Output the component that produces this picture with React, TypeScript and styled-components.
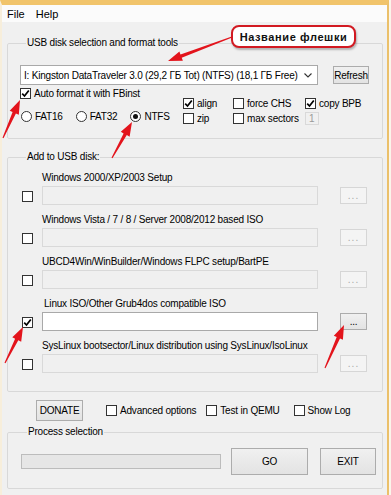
import React from "react";
import styled, { createGlobalStyle } from "styled-components";

// Red marker strokes drawn over the window: [tailX, tailY, tipX, tipY]
const ARROWS: [number, number, number, number][] = [
  [232, 37, 168, 61],
  [3, 138, 20, 100],
  [112, 158, 132, 122],
  [5, 363, 23, 327],
  [325, 368, 344, 325],
];

const arrowPoints = (x1: number, y1: number, x2: number, y2: number) => {
  const len = Math.hypot(x2 - x1, y2 - y1);
  const ux = (x2 - x1) / len;
  const uy = (y2 - y1) / len;
  const nx = -uy;
  const ny = ux;
  const head = 14;
  const bx = x2 - ux * head;
  const by = y2 - uy * head;
  const pts = [
    [x1 + nx * 0.6, y1 + ny * 0.6],
    [bx + nx * 1.8, by + ny * 1.8],
    [bx + nx * 5, by + ny * 5],
    [x2, y2],
    [bx - nx * 5, by - ny * 5],
    [bx - nx * 1.8, by - ny * 1.8],
    [x1 - nx * 0.6, y1 - ny * 0.6],
  ];
  return pts.map(p => p[0].toFixed(1) + "," + p[1].toFixed(1)).join(" ");
};

const GlobalStyle = createGlobalStyle`
  html, body {
    margin: 0;
    padding: 0;
    background: #fbf6ea;
  }
  body {
    font-family: "Liberation Sans", Arial, sans-serif;
    font-size: 10px;
    letter-spacing: -0.2px;
    color: #000;
  }
`;

const Root = styled.div`
  position: relative;
  width: 391px;
  height: 495px;
  overflow: hidden;
`;

const Window = styled.div`
  width: 389px;
  height: 495px;
  box-sizing: border-box;
  border-top: 5px solid #f1c46b;
  border-left: 2px solid #f7eedb;
  border-right: 2px solid #ebc06a;
  background: #f0f0f0;
  display: flex;
  flex-direction: column;
`;

const MenuBar = styled.div`
  height: 17px;
  background: #fbfbfb;
  display: flex;
  align-items: center;
  gap: 11px;
  padding-left: 5px;
  font-size: 11px;
  letter-spacing: 0;
`;

const Body = styled.div`
  padding: 14px 4px 0 5px;
`;

const Group = styled.fieldset<{ $mt: number; $pt: number; $pb: number; $pl: number }>`
  width: 376px;
  box-sizing: border-box;
  margin: ${p => p.$mt}px 0 0 0;
  padding: ${p => p.$pt}px 0 ${p => p.$pb}px ${p => p.$pl}px;
  border: 1px solid #d8d8d8;
  border-radius: 2px;
  min-width: 0;
`;

const Legend = styled.legend`
  margin-left: 6px;
  padding: 0 1px;
  line-height: 14px;
  font-size: 10px;
`;

const SelectRow = styled.div`
  display: flex;
  align-items: center;
  gap: 15px;
`;

const Select = styled.div`
  width: 298px;
  height: 20px;
  box-sizing: border-box;
  background: #fff;
  border: 1px solid #a9a9a9;
  display: flex;
  align-items: center;
  justify-content: space-between;
  padding: 0 5px 0 3px;
  white-space: nowrap;
  overflow: hidden;
`;

const Button = styled.div<{ $w: number; $h: number; $off?: boolean }>`
  width: ${p => p.$w}px;
  height: ${p => p.$h}px;
  box-sizing: border-box;
  flex: none;
  display: flex;
  align-items: center;
  justify-content: center;
  border: 1px solid ${p => (p.$off ? "#d6d6d6" : "#acacac")};
  background: ${p =>
    p.$off ? "#f4f4f4" : "linear-gradient(#f0f0f0, #e3e3e3)"};
  color: ${p => (p.$off ? "#a8a8a8" : "#000")};
  letter-spacing: ${p => (p.$off ? "1px" : "-0.2px")};
`;

const OptionsRow = styled.div`
  display: flex;
`;

const LeftCol = styled.div`
  width: 163px;
  display: flex;
  flex-direction: column;
  gap: 10px;
  padding-top: 2px;
`;

const RadioRow = styled.div`
  display: flex;
  gap: 13px;
  padding-left: 1px;
`;

const OptionGrid = styled.div`
  display: grid;
  grid-template-columns: 50px 72px auto;
  row-gap: 2px;
  padding-top: 12px;
  align-items: center;
`;

const Item = styled.div<{ $ml?: number }>`
  display: flex;
  align-items: center;
  gap: 3px;
  height: 13px;
  white-space: nowrap;
  margin-left: ${p => p.$ml || 0}px;
`;

const Box = styled.div`
  width: 11px;
  height: 11px;
  box-sizing: border-box;
  border: 1px solid #333;
  background: #fff;
  flex: none;
  display: flex;
  align-items: center;
  justify-content: center;
`;

const Circle = styled(Box)`
  border-radius: 50%;
`;

const Dot = styled.div`
  width: 5px;
  height: 5px;
  border-radius: 50%;
  background: #111;
`;

const SmallField = styled.div`
  width: 14px;
  height: 13px;
  box-sizing: border-box;
  border: 1px solid #d9d9d9;
  background: #f0f0f0;
  color: #9a9a9a;
  display: flex;
  align-items: center;
  padding-left: 3px;
`;

const IsoRow = styled.div`
  display: grid;
  grid-template-columns: 22px 276px 22px 27px;
  grid-template-rows: 14px 19px;
  row-gap: 1px;
  align-items: center;
  margin-bottom: 8px;
  &:last-child {
    margin-bottom: 0;
  }
`;

const IsoLabel = styled.div<{ $indent?: number }>`
  grid-column: 2 / 5;
  grid-row: 1;
  line-height: 14px;
  white-space: nowrap;
  padding-left: ${p => p.$indent || 0}px;
`;

const IsoCheck = styled.div`
  grid-column: 1;
  grid-row: 2;
  padding-left: 2px;
  padding-top: 2px;
`;

const PathField = styled.div<{ $on?: boolean }>`
  grid-column: 2;
  grid-row: 2;
  height: 19px;
  box-sizing: border-box;
  border: 1px solid ${p => (p.$on ? "#a9a9a9" : "#d9d9d9")};
  background: ${p => (p.$on ? "#fff" : "#f0f0f0")};
`;

const BrowseCell = styled.div`
  grid-column: 4;
  grid-row: 2;
`;

const FooterRow = styled.div`
  display: flex;
  align-items: center;
  margin-top: 8px;
  padding-left: 29px;
  height: 21px;
`;

const ProcessRow = styled.div`
  display: flex;
  align-items: center;
`;

const Progress = styled.div`
  width: 200px;
  height: 15px;
  box-sizing: border-box;
  border: 1px solid #bcbcbc;
  background: #e6e6e6;
  margin-right: 10px;
`;

const Overlay = styled.svg`
  position: absolute;
  left: 0;
  top: 0;
  pointer-events: none;
`;

const Callout = styled.div`
  position: absolute;
  left: 231px;
  top: 25px;
  width: 125px;
  height: 23px;
  box-sizing: border-box;
  border: 2px solid #d21a22;
  border-radius: 8px;
  background: #fff;
  box-shadow: 1px 2px 2px rgba(0, 0, 0, 0.25);
  display: flex;
  align-items: center;
  justify-content: center;
  font-weight: bold;
  font-size: 11px;
  letter-spacing: 0.6px;
  color: #111;
`;

const Tick = () => (
  <svg width="9" height="9" viewBox="0 0 9 9">
    <path d="M1.2 4.6 L3.5 7 L7.8 1.4" fill="none" stroke="#000" strokeWidth="1.7" />
  </svg>
);

const Check = ({ label, checked, ml }: { label?: string; checked?: boolean; ml?: number }) => (
  <Item $ml={ml}>
    <Box>{checked && <Tick />}</Box>
    {label && <span>{label}</span>}
  </Item>
);

const Radio = ({ label, checked }: { label: string; checked?: boolean }) => (
  <Item>
    <Circle>{checked && <Dot />}</Circle>
    <span>{label}</span>
  </Item>
);

const isoRows = [
  { label: "Windows 2000/XP/2003 Setup" },
  { label: "Windows Vista / 7 / 8 / Server 2008/2012 based ISO" },
  { label: "UBCD4Win/WinBuilder/Windows FLPC setup/BartPE" },
  { label: "Linux ISO/Other Grub4dos compatible ISO", on: true, indent: 2 },
  { label: "SysLinux bootsector/Linux distribution using SysLinux/IsoLinux" },
];

const App = () => {
  return (
    <Root>
      <GlobalStyle />
      <Window>
        <MenuBar>
          <span>File</span>
          <span>Help</span>
        </MenuBar>
        <Body>
          <Group $mt={0} $pt={15} $pb={13} $pl={12}>
            <Legend>USB disk selection and format tools</Legend>
            <SelectRow>
              <Select>
                <span>I: Kingston DataTraveler 3.0 (29,2 ГБ Tot) (NTFS) (18,1 ГБ Free)</span>
                <svg width="8" height="5" viewBox="0 0 8 5">
                  <path d="M0.5 0.5 L4 4 L7.5 0.5" fill="none" stroke="#333" strokeWidth="1.1" />
                </svg>
              </Select>
              <Button $w={36} $h={18}>Refresh</Button>
            </SelectRow>
            <OptionsRow>
              <LeftCol>
                <Check label="Auto format it with FBinst" checked />
                <RadioRow>
                  <Radio label="FAT16" />
                  <Radio label="FAT32" />
                  <Radio label="NTFS" checked />
                </RadioRow>
              </LeftCol>
              <OptionGrid>
                <Check label="align" checked />
                <Check label="force CHS" />
                <Check label="copy BPB" checked />
                <Check label="zip" />
                <Check label="max sectors" />
                <SmallField>1</SmallField>
              </OptionGrid>
            </OptionsRow>
          </Group>

          <Group $mt={11} $pt={7} $pb={18} $pl={12}>
            <Legend>Add to USB disk:</Legend>
            {isoRows.map(row => (
              <IsoRow key={row.label}>
                <IsoLabel $indent={row.indent}>{row.label}</IsoLabel>
                <IsoCheck>
                  <Box>{row.on && <Tick />}</Box>
                </IsoCheck>
                <PathField $on={row.on} />
                <BrowseCell>
                  <Button $w={27} $h={17} $off={!row.on}>...</Button>
                </BrowseCell>
              </IsoRow>
            ))}
          </Group>

          <FooterRow>
            <Button $w={47} $h={21}>DONATE</Button>
            <Check label="Advanced options" ml={23} />
            <Check label="Test in QEMU" ml={10} />
            <Check label="Show Log" ml={14} />
          </FooterRow>

          <Group $mt={4} $pt={9} $pb={13} $pl={13}>
            <Legend>Process selection</Legend>
            <ProcessRow>
              <Progress />
              <Button $w={77} $h={27}>GO</Button>
              <Button $w={56} $h={27} style={{ marginLeft: 12 }}>EXIT</Button>
            </ProcessRow>
          </Group>
        </Body>
      </Window>

      <Overlay width="391" height="495" viewBox="0 0 391 495">
        {ARROWS.map(([x1, y1, x2, y2], i) => (
          <polygon key={i} points={arrowPoints(x1, y1, x2, y2)} fill="#e3141c" />
        ))}
      </Overlay>
      <Callout>Название флешки</Callout>
    </Root>
  );
};

export default App;
